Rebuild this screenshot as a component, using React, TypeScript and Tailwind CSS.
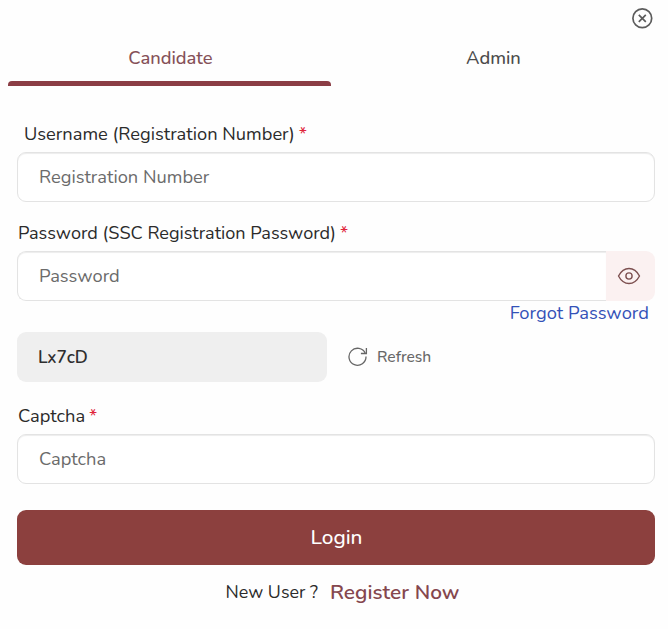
import { useState } from "react"

function CloseIcon() {
  return (
    <svg width="22" height="22" viewBox="0 0 22 22" fill="none" stroke="#5c5c5c" strokeWidth="1.7">
      <circle cx="11.3" cy="11.3" r="9.4" />
      <path d="M7.8 7.8l7 7M14.8 7.8l-7 7" />
    </svg>
  )
}

function EyeIcon() {
  return (
    <svg width="24" height="18" viewBox="0 0 24 18" fill="none" stroke="#7d5050" strokeWidth="1.4">
      <path d="M1.5 9C4 4.2 7.7 1.5 12 1.5S20 4.2 22.5 9C20 13.8 16.3 16.5 12 16.5S4 13.8 1.5 9z" strokeLinejoin="round" />
      <circle cx="12" cy="9" r="3.1" />
    </svg>
  )
}

function RefreshIcon() {
  return (
    <svg width="20" height="20" viewBox="0 0 20 20" fill="none" stroke="#666666" strokeWidth="1.3">
      <path d="M17.3 6.4A8.5 8.5 0 1 0 18 9.6" />
      <path d="M18.4 1v5.5h-5.5" />
    </svg>
  )
}

interface LabelProps {
  text: string
  htmlFor: string
  className: string
}

function Label({ text, htmlFor, className }: LabelProps) {
  return (
    <label htmlFor={htmlFor} className={`block h-6 leading-6 whitespace-nowrap text-[#2b2b2b] ${className}`}>
      {text}
      <span className="ml-1 text-[#e0243a]">*</span>
    </label>
  )
}

const tabs = [
  { id: "candidate", label: "Candidate" },
  { id: "admin", label: "Admin" },
]

const inputClass =
  "h-[50px] w-full rounded-[9px] border border-[#e3e3e3] bg-white pl-[21px] text-[18.3px] text-[#333] shadow-[inset_0_1px_1px_#ededed] outline-none placeholder:text-[#6b6b6b]"

export default function App() {
  const [tab, setTab] = useState("candidate")
  const [showPassword, setShowPassword] = useState(false)

  return (
    <div className="h-[629px] w-[668px] overflow-hidden bg-[#fefefe] font-['Nunito','Lato',sans-serif]">
      {/* Close button */}
      <div className="flex h-[38px] justify-end pt-[7px] pr-[15px]">
        <button aria-label="Close" className="h-[22px]">
          <CloseIcon />
        </button>
      </div>

      {/* Tabs */}
      <div className="grid grid-cols-2 pr-[14px] pl-2">
        {tabs.map((t) => (
          <button
            key={t.id}
            onClick={() => setTab(t.id)}
            className={`flex h-12 flex-col text-[18.35px] font-medium ${tab === t.id ? "text-[#855058]" : "text-[#4b4b4b]"}`}
          >
            <span className="w-full pt-[6px] pl-[2px] leading-[28px]">{t.label}</span>
            <span className={`mt-auto h-[5px] w-full rounded-t-[4px] ${tab === t.id ? "bg-[#8b3d45]" : "bg-transparent"}`} />
          </button>
        ))}
      </div>

      {/* Login form */}
      <form className="pt-9 pr-[13px] pl-[17px]" onSubmit={(e) => e.preventDefault()}>
        <Label text="Username (Registration Number)" htmlFor="username" className="mb-[6px] pl-[7px] text-[18.3px]" />
        <input id="username" placeholder="Registration Number" className={inputClass} />

        <Label text="Password (SSC Registration Password)" htmlFor="password" className="mt-[19px] mb-[6px] pl-px text-[18.1px]" />
        <div className="flex h-[50px]">
          <input
            id="password"
            type={showPassword ? "text" : "password"}
            placeholder="Password"
            className={`${inputClass} rounded-r-none border-r-0`}
          />
          <button
            type="button"
            aria-label="Show password"
            onClick={() => setShowPassword(!showPassword)}
            className="flex w-[49px] shrink-0 items-center justify-center rounded-r-[9px] bg-[#fbf1f1] pr-[3px]"
          >
            <EyeIcon />
          </button>
        </div>
        <div className="flex h-[31px] justify-end pr-[6px]">
          <a href="#" className="h-6 text-[18.35px] leading-6 text-[#3452b8]">Forgot Password</a>
        </div>

        <div className="flex items-center">
          <div className="flex h-[50px] w-[310px] items-center rounded-[9px] bg-[#efefef] pt-px pl-[21px] text-[17.3px] font-semibold text-[#2e2e2e]">
            Lx7cD
          </div>
          <button type="button" className="ml-[21px] flex items-center gap-[9px] text-[15.6px] font-medium text-[#686868]">
            <RefreshIcon />
            <span className="pt-[2px]">Refresh</span>
          </button>
        </div>

        <Label text="Captcha" htmlFor="captcha" className="mt-[22px] mb-[6px] pl-px text-[18.3px]" />
        <input id="captcha" placeholder="Captcha" className={inputClass} />

        <button type="submit" className="mt-[26px] h-[55px] w-full rounded-[9px] bg-[#8c403e] pl-px text-[20.8px] font-medium text-white">
          Login
        </button>

        <div className="mt-[13px] flex h-7 items-center justify-center gap-3 pl-[13px]">
          <span className="text-[17.9px] text-[#2b2b2b]">New User ?</span>
          <a href="#" className="pt-[2px] text-[20.8px] font-semibold tracking-[0.05px] text-[#85474e]">Register Now</a>
        </div>
      </form>
    </div>
  )
}
